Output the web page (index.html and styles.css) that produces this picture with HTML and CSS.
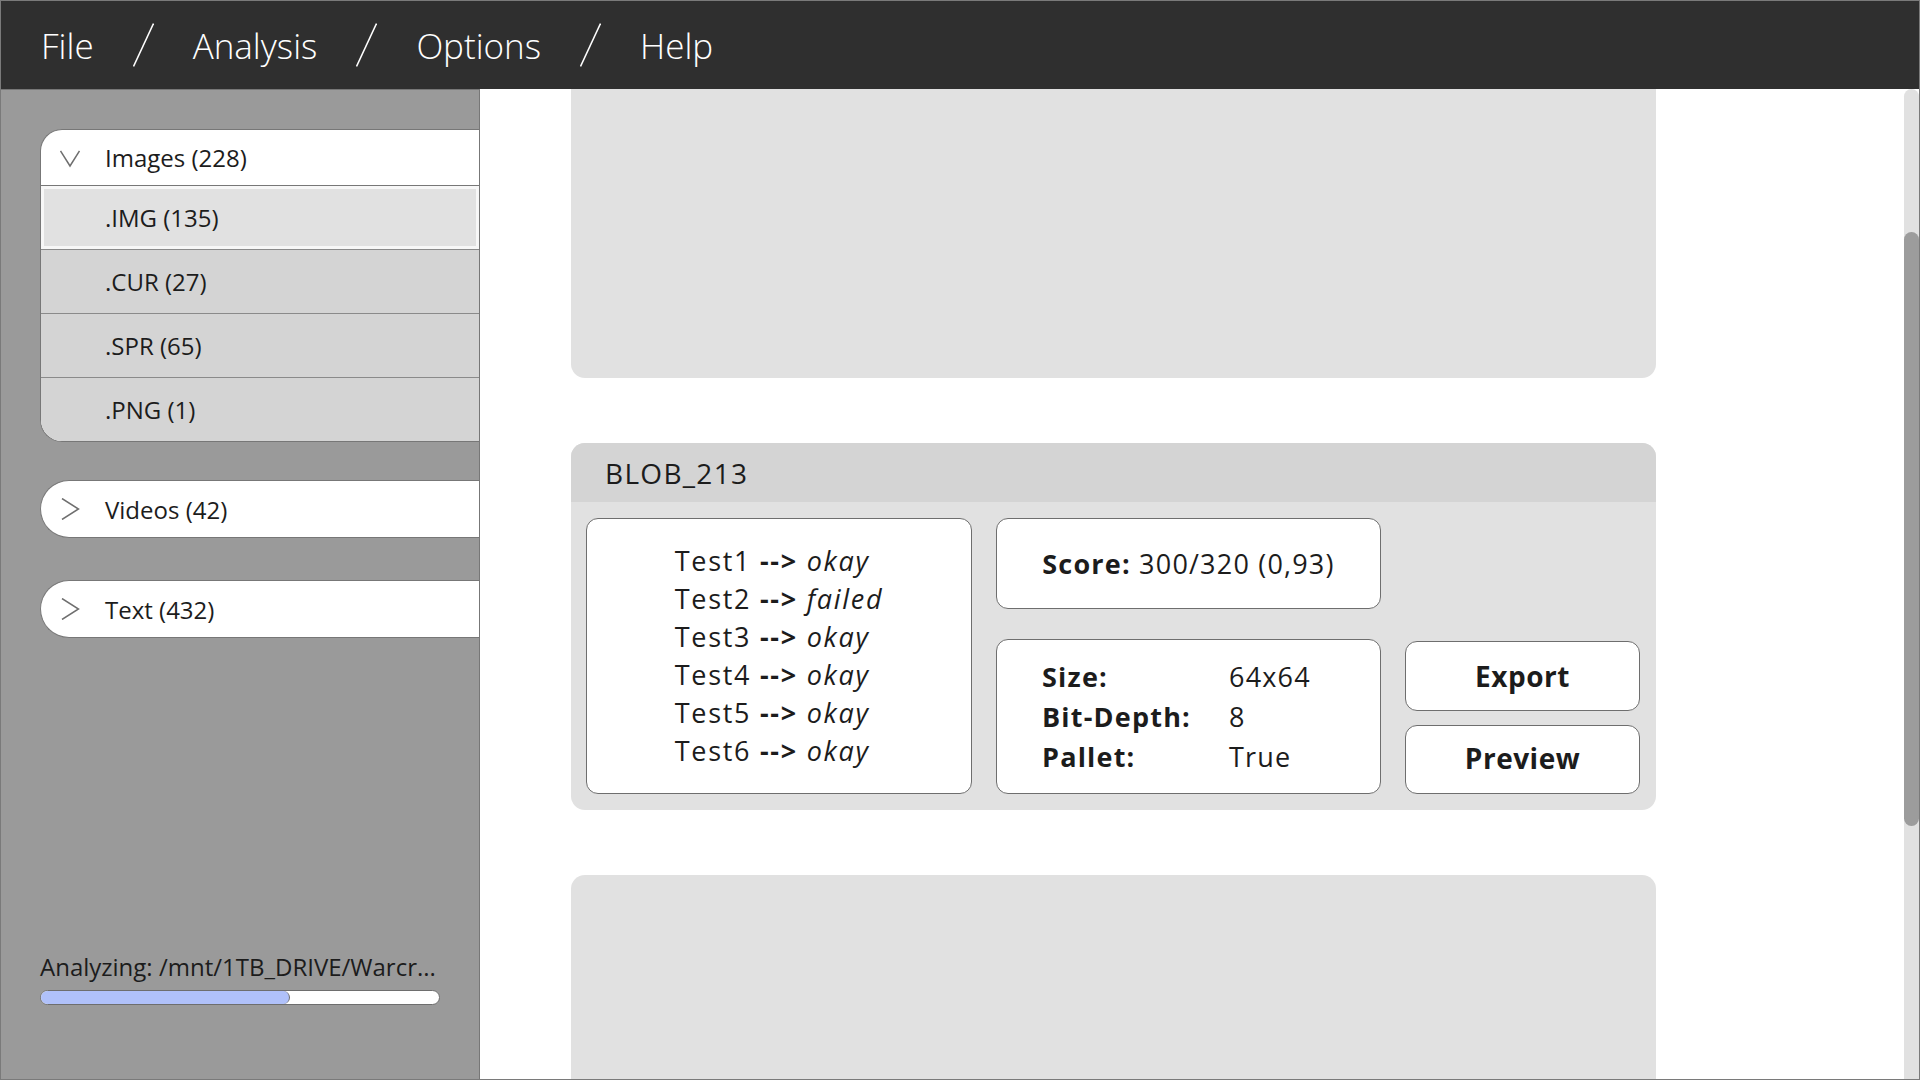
FILE: index.html
```html
<!DOCTYPE html>
<html lang="en">
<head>
<meta charset="utf-8">
<title>Analyzer</title>
<link rel="stylesheet" href="styles.css">
</head>
<body>
<div class="app">
  <header class="menubar">
    <span class="menu-item">File</span>
    <svg class="sep" width="21" height="44" viewBox="0 0 21 44"><line x1="20.5" y1="0.5" x2="0.5" y2="43.5"/></svg>
    <span class="menu-item">Analysis</span>
    <svg class="sep" width="21" height="44" viewBox="0 0 21 44"><line x1="20.5" y1="0.5" x2="0.5" y2="43.5"/></svg>
    <span class="menu-item">Options</span>
    <svg class="sep" width="21" height="44" viewBox="0 0 21 44"><line x1="20.5" y1="0.5" x2="0.5" y2="43.5"/></svg>
    <span class="menu-item">Help</span>
  </header>
  <div class="workspace">
    <aside class="sidebar">
      <div class="group group-open">
        <div class="group-head">
          <svg class="chev" width="20" height="20" viewBox="0 0 20 20"><polyline points="0.5,3 10,18 19.5,3"/></svg>
          <span>Images (228)</span>
        </div>
        <div class="group-item selected">.IMG (135)</div>
        <div class="group-item">.CUR (27)</div>
        <div class="group-item">.SPR (65)</div>
        <div class="group-item last">.PNG (1)</div>
      </div>
      <div class="group group-closed">
        <div class="group-head">
          <svg class="chev" width="20" height="22" viewBox="0 0 20 22"><polyline points="2,0.5 18.5,11 2,21.5"/></svg>
          <span>Videos (42)</span>
        </div>
      </div>
      <div class="group group-closed group-text">
        <div class="group-head">
          <svg class="chev" width="20" height="22" viewBox="0 0 20 22"><polyline points="2,0.5 18.5,11 2,21.5"/></svg>
          <span>Text (432)</span>
        </div>
      </div>
      <div class="progress">
        <div class="progress-label">Analyzing: /mnt/1TB_DRIVE/Warcr...</div>
        <div class="progress-bar"><div class="progress-fill" style="width: 62.6%"></div></div>
      </div>
    </aside>
    <main class="main">
      <div class="cards">
        <section class="card card-empty"></section>
        <section class="card">
          <div class="card-head">BLOB_213</div>
          <div class="card-body">
            <div class="box tests">
              <div class="tests-list">
                <div>Test1 <b>--&gt;</b> <i>okay</i></div>
                <div>Test2 <b>--&gt;</b> <i>failed</i></div>
                <div>Test3 <b>--&gt;</b> <i>okay</i></div>
                <div>Test4 <b>--&gt;</b> <i>okay</i></div>
                <div>Test5 <b>--&gt;</b> <i>okay</i></div>
                <div>Test6 <b>--&gt;</b> <i>okay</i></div>
              </div>
            </div>
            <div class="box score"><span><b>Score:</b> 300/320 (0,93)</span></div>
            <div class="box info">
              <b>Size:</b><span>64x64</span>
              <b>Bit-Depth:</b><span>8</span>
              <b>Pallet:</b><span>True</span>
            </div>
            <div class="actions">
              <button class="btn btn-export">Export</button>
              <button class="btn btn-preview">Preview</button>
            </div>
          </div>
        </section>
        <section class="card card-empty card-tall"></section>
      </div>
    </main>
    <div class="scrollbar"><div class="scroll-thumb"></div></div>
  </div>
</div>
</body>
</html>
```
FILE: styles.css
```css
* { box-sizing: border-box; }
html, body { margin: 0; padding: 0; }
body {
  width: 1920px;
  height: 1080px;
  overflow: hidden;
  font-family: "Open Sans", "Liberation Sans", sans-serif;
  color: #1c1c1c;
  background: #ffffff;
}
.app {
  width: 1920px;
  height: 1080px;
  border: 1px solid #7a7a7a;
  display: flex;
  flex-direction: column;
}
.menubar {
  height: 88px;
  flex: 0 0 88px;
  background: #2f2f2f;
  display: flex;
  align-items: center;
  gap: 39px;
  padding-left: 40px;
  color: #ffffff;
}
.menu-item {
  font-size: 35px;
  font-weight: 300;
  line-height: 1;
}
.sep line { stroke: #ffffff; stroke-width: 1.6; }
.workspace {
  flex: 1 1 auto;
  display: flex;
  min-height: 0;
}
.sidebar {
  width: 479px;
  flex: 0 0 479px;
  background: #9a9a9a;
  border-right: 1px solid #777777;
  border-top: 1px solid #777777;
  display: flex;
  flex-direction: column;
  padding: 39px 0 74px 39px;
  gap: 38px;
}
.group {
  border: 1px solid #777777;
  border-right: none;
  background: #ffffff;
  font-size: 24px;
  overflow: hidden;
}
.group-open { border-radius: 22px 0 0 22px; }
.group-closed { border-radius: 29px 0 0 29px; }
.group-text { margin-top: 4px; }
.group-head {
  height: 56px;
  display: flex;
  align-items: center;
  padding-left: 19px;
  gap: 25px;
}
.group-open .group-head { border-bottom: 1px solid #777777; }
.chev polyline { fill: none; stroke: #6f6f6f; stroke-width: 1.5; }
.group-item {
  height: 64px;
  display: flex;
  align-items: center;
  padding-left: 64px;
  background: #d4d4d4;
  border-bottom: 1px solid #8a8a8a;
}
.group-item.last { border-bottom: none; height: 63px; }
.group-item.selected {
  background: #e1e1e1;
  box-shadow: inset 0 0 0 3px #f7f7f7;
}
.progress { margin-top: auto; width: 400px; }
.progress-label {
  font-size: 24px;
  line-height: 32px;
  white-space: nowrap;
  margin-bottom: 7px;
}
.progress-bar {
  height: 15px;
  border: 1px solid #6e6e6e;
  border-radius: 8px;
  background: #ffffff;
  overflow: hidden;
}
.progress-fill {
  height: 100%;
  background: #b0c1fa;
  border-right: 1px solid #6e6e6e;
  border-radius: 0 7px 7px 0;
}
.main {
  flex: 1 1 auto;
  overflow: hidden;
  padding-left: 91px;
}
.cards {
  width: 1085px;
  margin-top: -78px;
  display: flex;
  flex-direction: column;
  gap: 65px;
}
.card {
  background: #e1e1e1;
  border-radius: 14px;
  overflow: hidden;
  height: 367px;
  flex: 0 0 auto;
}
.card-tall { height: 600px; }
.card-head {
  height: 59px;
  background: #d4d4d4;
  display: flex;
  align-items: center;
  padding-left: 34px;
  font-size: 28px;
  letter-spacing: 1.3px;
}
.card-body {
  display: grid;
  grid-template-columns: 386px 385px 235px;
  grid-template-rows: 91px 155px;
  column-gap: 24px;
  row-gap: 30px;
  padding: 16px 15px 16px 15px;
}
.box {
  background: #ffffff;
  border: 1px solid #6e6e6e;
  border-radius: 12px;
  font-size: 27px;
  letter-spacing: 1.2px;
}
.tests {
  grid-row: 1 / 3;
  grid-column: 1;
  display: flex;
  align-items: center;
  justify-content: center;
  letter-spacing: 1.7px;
}
.tests-list { line-height: 38px; }
.tests-list b { font-weight: 700; }
.score {
  grid-row: 1;
  grid-column: 2;
  display: flex;
  align-items: center;
  justify-content: center;
}
.score b { font-weight: 700; }
.info {
  grid-row: 2;
  grid-column: 2;
  display: grid;
  grid-template-columns: 187px auto;
  align-content: center;
  line-height: 40px;
  padding-left: 45px;
}
.info b { font-weight: 700; }
.actions {
  grid-row: 2;
  grid-column: 3;
  display: flex;
  flex-direction: column;
  justify-content: flex-end;
  gap: 14px;
}
.btn {
  background: #ffffff;
  border: 1px solid #6e6e6e;
  border-radius: 12px;
  font-family: "Open Sans", "Liberation Sans", sans-serif;
  font-size: 28px;
  font-weight: 700;
  letter-spacing: 0.5px;
  color: #1c1c1c;
  padding: 0;
}
.btn-export { height: 70px; }
.btn-preview { height: 69px; padding-bottom: 3px; }
.scrollbar {
  width: 15px;
  flex: 0 0 15px;
  background: #e1e1e1;
  border-radius: 8px 8px 0 0;
  padding-top: 143px;
}
.scroll-thumb {
  height: 594px;
  background: #9c9c9c;
  border-radius: 8px;
}
```
